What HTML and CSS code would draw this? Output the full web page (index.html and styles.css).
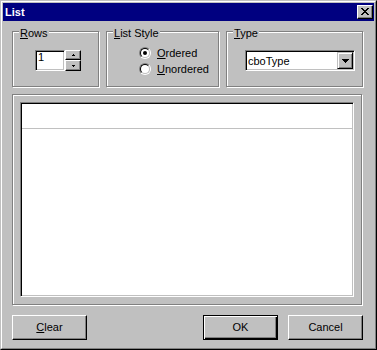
FILE: index.html
```html
<!DOCTYPE html>
<html lang="en">
<head>
    <meta charset="UTF-8">
    <title>List</title>
    <link rel="stylesheet" href="styles.css">
</head>
<body>

    <div class="window">
        <div class="window-inner">

            <div class="titlebar">
                <span class="title">List</span>
                <button class="close-btn">
                    <svg width="8" height="7" viewBox="0 0 8 7" shape-rendering="crispEdges">
                        <path fill="#000" d="M0 0h2v1H0z M6 0h2v1H6z M1 1h2v1H1z M5 1h2v1H5z M2 2h4v1H2z M3 3h2v1H3z M2 4h4v1H2z M1 5h2v1H1z M5 5h2v1H5z M0 6h2v1H0z M6 6h2v1H6z"/>
                    </svg>
                </button>
            </div>

            <div class="content">

                <div class="top-row">
                    <!-- Rows -->
                    <div class="group group-rows">
                        <div class="group-label"><u>R</u>ows</div>
                        <div class="spin">
                            <div class="spin-input">1</div>
                            <div class="spin-buttons">
                                <div class="spin-btn">
                                    <svg width="3" height="2" viewBox="0 0 3 2" shape-rendering="crispEdges"><path fill="#000" d="M1 0h1v1h1v1H0V1h1z"/></svg>
                                </div>
                                <div class="spin-btn">
                                    <svg width="3" height="2" viewBox="0 0 3 2" shape-rendering="crispEdges"><path fill="#000" d="M0 0h3v1H2v1H1V1H0z"/></svg>
                                </div>
                            </div>
                        </div>
                    </div>

                    <!-- List Style -->
                    <div class="group group-style">
                        <div class="group-label"><u>L</u>ist Style</div>
                        <div class="radio-list">
                            <div class="radio-row">
                                <span class="radio checked"><span class="radio-inner"><span class="radio-dot"></span></span></span>
                                <span><u>O</u>rdered</span>
                            </div>
                            <div class="radio-row">
                                <span class="radio"><span class="radio-inner"></span></span>
                                <span><u>U</u>nordered</span>
                            </div>
                        </div>
                    </div>

                    <!-- Type -->
                    <div class="group group-type">
                        <div class="group-label"><u>T</u>ype</div>
                        <div class="combo">
                            <span class="combo-text">cboType</span>
                            <div class="combo-btn">
                                <svg width="7" height="4" viewBox="0 0 7 4" shape-rendering="crispEdges"><path fill="#000" d="M0 0h7v1H6v1H5v1H4v1H3V3H2V2H1V1H0z"/></svg>
                            </div>
                        </div>
                    </div>
                </div>

                <div class="frame">
                    <div class="list">
                        <div class="list-header"></div>
                    </div>
                </div>

                <div class="button-row">
                    <button class="btn"><u>C</u>lear</button>
                    <button class="btn btn-default">OK</button>
                    <button class="btn">Cancel</button>
                </div>

            </div>
        </div>
    </div>

</body>
</html>
```

FILE: styles.css
```css
body {
    margin: 0;
    font-family: "Liberation Sans", Arial, sans-serif;
    font-size: 11px;
    line-height: 13px;
    color: #000;
    background-color: #c0c0c0;
}

u {
    text-decoration: underline;
    text-underline-offset: 1px;
}

.window {
    width: 377px;
    height: 350px;
    box-sizing: border-box;
    border: 1px solid;
    border-color: #c0c0c0 #000 #000 #c0c0c0;
    background-color: #c0c0c0;
}

.window-inner {
    height: 100%;
    box-sizing: border-box;
    border: 1px solid;
    border-color: #fff #808080 #808080 #fff;
    padding: 1px;
}

/* title bar */
.titlebar {
    height: 18px;
    background-color: #000080;
    display: flex;
    align-items: center;
    justify-content: space-between;
    padding: 0 1px 0 2px;
}

.title {
    color: #fff;
    font-weight: bold;
}

.close-btn {
    width: 16px;
    height: 14px;
    padding: 0 0 1px 0;
    margin: 0;
    border: 1px solid;
    border-color: #fff #000 #000 #fff;
    box-shadow: inset -1px -1px 0 #808080;
    background-color: #c0c0c0;
    display: flex;
    align-items: center;
    justify-content: center;
}

.content {
    padding: 10px 0 0 9px;
}

/* group boxes */
.top-row {
    display: flex;
    gap: 7px;
}

.group {
    height: 56px;
    box-sizing: border-box;
    border: 1px solid #808080;
    box-shadow: 1px 1px 0 #fff, inset 1px 1px 0 #fff;
}

.group-rows { width: 87px; }
.group-style { width: 113px; }
.group-type { width: 137px; }

.group-label {
    width: fit-content;
    margin: -5px 0 0 6px;
    padding: 0 1px;
    background-color: #c0c0c0;
}

/* spinner */
.spin {
    display: flex;
    margin: 10px 0 0 22px;
}

.spin-input {
    width: 30px;
    height: 21px;
    box-sizing: border-box;
    padding: 0 2px;
    border: 1px solid;
    border-color: #808080 #fff #fff #808080;
    box-shadow: inset 1px 1px 0 #000, inset -1px -1px 0 #c0c0c0;
    background-color: #fff;
}

.spin-buttons {
    display: flex;
    flex-direction: column;
}

.spin-btn {
    width: 16px;
    height: 10px;
    box-sizing: border-box;
    border: 1px solid;
    border-color: #fff #000 #000 #fff;
    box-shadow: inset -1px -1px 0 #808080;
    display: flex;
    align-items: center;
    justify-content: center;
}

.spin-btn + .spin-btn {
    height: 11px;
}

/* radios */
.radio-list {
    margin-top: 5px;
    padding-left: 32px;
}

.radio-row {
    display: flex;
    align-items: center;
    gap: 6px;
    height: 16px;
}

.radio {
    width: 12px;
    height: 12px;
    box-sizing: border-box;
    border: 1px solid;
    border-color: #808080 #fff #fff #808080;
    border-radius: 50%;
}

.radio-inner {
    display: flex;
    align-items: center;
    justify-content: center;
    width: 10px;
    height: 10px;
    box-sizing: border-box;
    border: 1px solid;
    border-color: #000 #c0c0c0 #c0c0c0 #000;
    border-radius: 50%;
    background-color: #fff;
}

.radio-dot {
    width: 4px;
    height: 4px;
    border-radius: 50%;
    background-color: #000;
}

/* combo box */
.combo {
    display: flex;
    align-items: center;
    justify-content: space-between;
    width: 110px;
    height: 21px;
    box-sizing: border-box;
    margin: 10px 0 0 18px;
    padding: 1px 1px 1px 1px;
    border: 1px solid;
    border-color: #808080 #fff #fff #808080;
    box-shadow: inset 1px 1px 0 #000, inset -1px -1px 0 #c0c0c0;
    background-color: #fff;
}

.combo-text {
    padding-left: 1px;
    padding-top: 2px;
}

.combo-btn {
    width: 16px;
    height: 17px;
    box-sizing: border-box;
    border: 1px solid;
    border-color: #c0c0c0 #000 #000 #c0c0c0;
    box-shadow: inset 1px 1px 0 #fff, inset -1px -1px 0 #808080;
    background-color: #c0c0c0;
    display: flex;
    align-items: center;
    justify-content: center;
}

/* list frame */
.frame {
    width: 350px;
    height: 211px;
    box-sizing: border-box;
    margin-top: 7px;
    padding: 7px;
    border: 1px solid #808080;
    box-shadow: 1px 1px 0 #fff, inset 1px 1px 0 #fff;
    display: flex;
}

.list {
    flex: 1;
    padding: 1px;
    border: 1px solid;
    border-color: #808080 #fff #fff #808080;
    box-shadow: inset 1px 1px 0 #000, inset -1px -1px 0 #c0c0c0;
    background-color: #fff;
}

.list-header {
    height: 24px;
    border-bottom: 1px solid #c0c0c0;
}

/* buttons */
.button-row {
    display: flex;
    gap: 10px;
    width: 351px;
    margin-top: 10px;
}

.btn {
    width: 75px;
    height: 25px;
    margin: 0;
    padding: 0 0 1px 0;
    font: inherit;
    color: #000;
    border: 1px solid;
    border-color: #fff #000 #000 #fff;
    box-shadow: inset -1px -1px 0 #808080;
    background-color: #c0c0c0;
}

.btn-default {
    margin-left: auto;
    border-color: #000;
    box-shadow: inset 1px 1px 0 #fff, inset -1px -1px 0 #000, inset -2px -2px 0 #808080;
}
```
